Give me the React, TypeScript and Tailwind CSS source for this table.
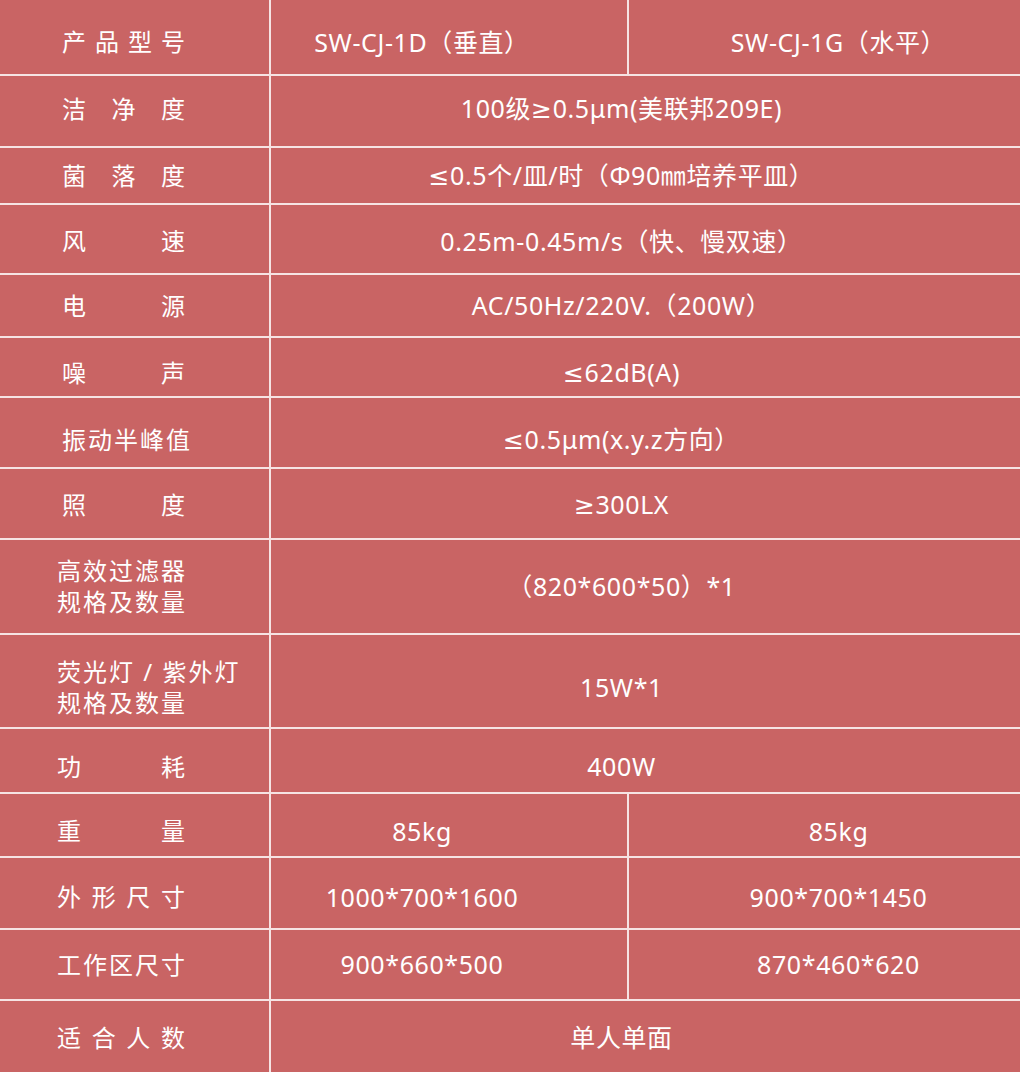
import React from "react";

type Row = {
  label: string[] | string[][];
  h: string;
  shift: string;
  inset: "wide" | "narrow";
  justify?: boolean;
  values: string[];
};

const rows: Row[] = [
  { label: ["产", "品", "型", "号"], h: "h-[74px]", shift: "pt-[10px]", inset: "wide", justify: true, values: ["SW-CJ-1D（垂直）", "SW-CJ-1G（水平）"] },
  { label: ["洁", "净", "度"], h: "h-[70px]", shift: "pb-[4px]", inset: "wide", justify: true, values: ["100级≥0.5μm(美联邦209E)"] },
  { label: ["菌", "落", "度"], h: "h-[55px]", shift: "pt-0", inset: "wide", justify: true, values: ["≤0.5个/皿/时（Φ90㎜培养平皿）"] },
  { label: ["风", "速"], h: "h-[68px]", shift: "pt-[4px]", inset: "wide", justify: true, values: ["0.25m-0.45m/s（快、慢双速）"] },
  { label: ["电", "源"], h: "h-[61px]", shift: "pt-0", inset: "wide", justify: true, values: ["AC/50Hz/220V.（200W）"] },
  { label: ["噪", "声"], h: "h-[58px]", shift: "pt-[12px]", inset: "wide", justify: true, values: ["≤62dB(A)"] },
  { label: ["振动半峰值"], h: "h-[69px]", shift: "pt-[14px]", inset: "wide", values: ["≤0.5μm(x.y.z方向）"] },
  { label: ["照", "度"], h: "h-[69px]", shift: "pt-[2px]", inset: "wide", justify: true, values: ["≥300LX"] },
  { label: [["高效过滤器"], ["规格及数量"]], h: "h-[93px]", shift: "pt-0", inset: "narrow", values: ["（820*600*50）*1"] },
  { label: [["荧光灯 / 紫外灯"], ["规格及数量"]], h: "h-[92px]", shift: "pt-[12px]", inset: "narrow", values: ["15W*1"] },
  { label: ["功", "耗"], h: "h-[63px]", shift: "pt-[12px]", inset: "narrow", justify: true, values: ["400W"] },
  { label: ["重", "量"], h: "h-[62px]", shift: "pt-[12px]", inset: "narrow", justify: true, values: ["85kg", "85kg"] },
  { label: ["外", "形", "尺", "寸"], h: "h-[70px]", shift: "pt-[8px]", inset: "narrow", justify: true, values: ["1000*700*1600", "900*700*1450"] },
  { label: ["工作区尺寸"], h: "h-[69px]", shift: "pt-0", inset: "narrow", values: ["900*660*500", "870*460*620"] },
  { label: ["适", "合", "人", "数"], h: "h-[71px]", shift: "pt-[2px]", inset: "narrow", justify: true, values: ["单人单面"] },
];

// the CJK font draws ≤ / ≥ slanted, the reference has the flat-bar form
function Value({ text }: { text: string }) {
  const parts = text.split(/([≤≥])/);
  return (
    <span>
      {parts.map((p, i) =>
        p === "≤" || p === "≥" ? (
          <span key={i} className="font-['DejaVu_Sans']">
            {p}
          </span>
        ) : (
          <React.Fragment key={i}>{p}</React.Fragment>
        )
      )}
    </span>
  );
}

function Label({ row }: { row: Row }) {
  const inset = row.inset === "wide" ? "pl-[62px]" : "pl-[57px]";
  const width = row.inset === "wide" ? "w-[123px]" : "w-[128px]";

  if (Array.isArray(row.label[0])) {
    return (
      <div className={`${inset} flex flex-col gap-[5px] tracking-[2px]`}>
        {(row.label as string[][]).map((l) => (
          <span key={l[0]} className="whitespace-pre leading-[26px]">
            {l[0]}
          </span>
        ))}
      </div>
    );
  }

  if (!row.justify) {
    return <div className={`${inset} tracking-[2px]`}>{row.label[0] as string}</div>;
  }

  return (
    <div className={inset}>
      <div className={`${width} flex justify-between`}>
        {(row.label as string[]).map((c) => (
          <span key={c}>{c}</span>
        ))}
      </div>
    </div>
  );
}

export default function App() {
  const cell = "flex items-center justify-center bg-[#c96464] text-[25px] tracking-[0.6px]";
  return (
    <div
      className="w-[1020px] bg-white text-white text-[24px] leading-none"
      style={{ fontFamily: '"Noto Sans", "Noto Sans CJK SC", sans-serif' }}
    >
      <div className="flex flex-col gap-[2px] bg-[#f6e4e4]">
        {rows.map((row, i) => (
          <div
            key={i}
            className={`grid gap-[2px] ${row.h} ${
              row.values.length === 2
                ? "grid-cols-[269px_356px_1fr]"
                : "grid-cols-[269px_1fr]"
            }`}
          >
            <div className={`flex items-center bg-[#c96464] ${row.shift}`}>
              <Label row={row} />
            </div>
            {row.values.length === 2 ? (
              <>
                <div className={`${cell} pr-[54px] ${row.shift}`}>
                  <Value text={row.values[0]} />
                </div>
                <div className={`${cell} pl-[28px] ${row.shift}`}>
                  <Value text={row.values[1]} />
                </div>
              </>
            ) : (
              <div className={`${cell} pr-[48px] ${row.shift}`}>
                <Value text={row.values[0]} />
              </div>
            )}
          </div>
        ))}
      </div>
      <div className="h-[13px]" />
    </div>
  );
}
